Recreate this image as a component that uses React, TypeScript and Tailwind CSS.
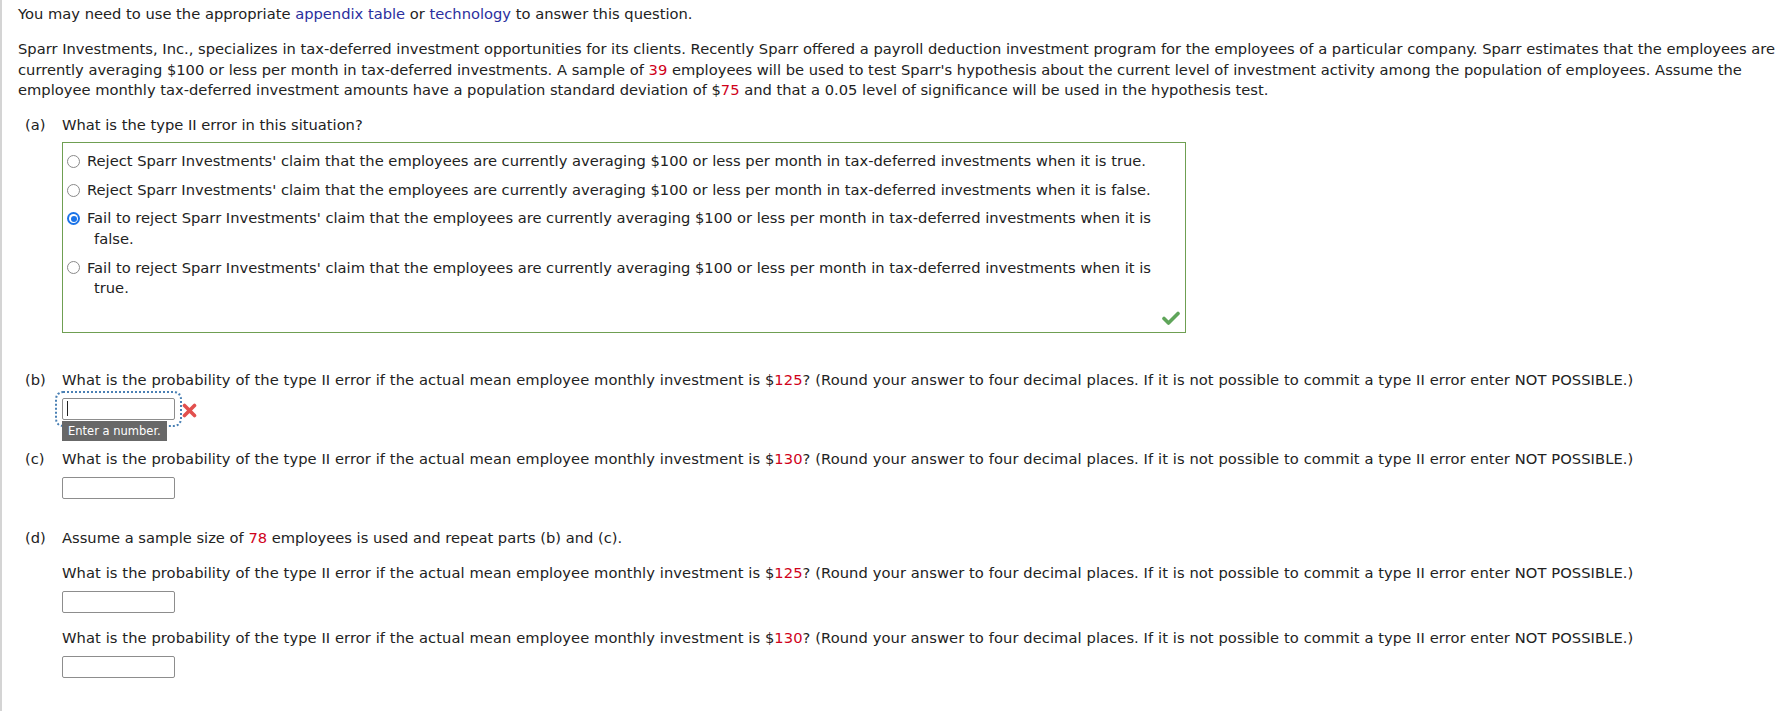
import React from 'react'

const font = { fontFamily: '"DejaVu Sans", Verdana, sans-serif' }

function Radio({ checked }: { checked?: boolean }) {
    if (checked) {
        return (
            <span className="inline-flex w-[13px] h-[13px] shrink-0 rounded-full bg-[#1a73e8] items-center justify-center">
                <span className="w-[9px] h-[9px] rounded-full bg-white flex items-center justify-center">
                    <span className="w-[6px] h-[6px] rounded-full bg-[#1a73e8]" />
                </span>
            </span>
        )
    }
    return <span className="inline-block w-[13px] h-[13px] shrink-0 rounded-full border border-[#8a8a8a] bg-white" />
}

function Option({ checked, first, rest }: { checked?: boolean; first: string; rest?: string }) {
    return (
        <div className="flex items-start">
            <span className="h-[20.6px] flex items-center pl-[4px] pr-[7px]">
                <Radio checked={checked} />
            </span>
            <div className="whitespace-nowrap">
                {first}
                {rest && (
                    <>
                        <br />
                        <span className="pl-[7px]">{rest}</span>
                    </>
                )}
            </div>
        </div>
    )
}

function AnswerBox({ focused }: { focused?: boolean }) {
    if (focused) {
        return (
            <div className="mt-[7.5px] flex items-center">
                <div className="relative outline-2 outline-dotted outline-[#4a80b4] outline-offset-[5px] rounded-[1px]">
                    <div className="w-[113px] h-[22px] border border-[#8d8d8d] rounded-[2px] bg-white flex items-center pl-[4px]">
                        <span className="w-[1px] h-[15px] bg-[#222]" />
                    </div>
                    <div className="absolute left-0 top-[23px] z-10 bg-[#686868] text-white text-[11.5px] leading-[20px] px-[6px] whitespace-nowrap">
                        Enter a number.
                    </div>
                </div>
                <svg className="ml-[7px] mt-[3px]" width="15" height="15" viewBox="0 0 15 15">
                    <path d="M2.5 2.5 L12.5 12.5 M12.5 2.5 L2.5 12.5" stroke="#e2504e" strokeWidth="3.6" strokeLinecap="round" />
                </svg>
            </div>
        )
    }
    return <div className="mt-[7.5px] w-[113px] h-[22px] border border-[#8d8d8d] rounded-[2px] bg-white" />
}

function Red({ children }: { children: React.ReactNode }) {
    return <span className="text-[#d0021b]">{children}</span>
}

const QUESTION_TAIL = '? (Round your answer to four decimal places. If it is not possible to commit a type II error enter NOT POSSIBLE.)'

function Question({ amount }: { amount: string }) {
    return (
        <div className="whitespace-nowrap tracking-[0.08px]">
            What is the probability of the type II error if the actual mean employee monthly investment is $<Red>{amount}</Red>
            {QUESTION_TAIL}
        </div>
    )
}

export default function App() {
    return (
        <div className="min-h-[711px] bg-white border-l-2 border-[#d4d4d4] pl-[16px] pt-[4px] text-[14.7px] leading-[20.6px] text-[#222]" style={font}>
            <p className="whitespace-nowrap">
                You may need to use the appropriate <span className="text-[#2b2f9e]">appendix table</span> or{' '}
                <span className="text-[#2b2f9e]">technology</span> to answer this question.
            </p>

            <p className="mt-[14.5px] whitespace-nowrap">
                Sparr Investments, Inc., specializes in tax-deferred investment opportunities for its clients. Recently Sparr offered a payroll deduction investment program for the employees of a particular company. Sparr estimates that the employees are
                <br />
                currently averaging $100 or less per month in tax-deferred investments. A sample of <Red>39</Red> employees will be used to test Sparr's hypothesis about the current level of investment activity among the population of employees. Assume the
                <br />
                employee monthly tax-deferred investment amounts have a population standard deviation of $<Red>75</Red> and that a 0.05 level of significance will be used in the hypothesis test.
            </p>

            {/* (a) */}
            <div className="mt-[13.7px] flex">
                <span className="w-[44px] pl-[7px] shrink-0">(a)</span>
                <div>
                    <div>What is the type II error in this situation?</div>
                    <div className="mt-[7px] w-[1124px] border border-[#6f9f52]">
                        <div className="pt-[8px] flex flex-col gap-[8px]">
                            <Option first="Reject Sparr Investments' claim that the employees are currently averaging $100 or less per month in tax-deferred investments when it is true." />
                            <Option first="Reject Sparr Investments' claim that the employees are currently averaging $100 or less per month in tax-deferred investments when it is false." />
                            <Option checked first="Fail to reject Sparr Investments' claim that the employees are currently averaging $100 or less per month in tax-deferred investments when it is" rest="false." />
                            <Option first="Fail to reject Sparr Investments' claim that the employees are currently averaging $100 or less per month in tax-deferred investments when it is" rest="true." />
                        </div>
                        <div className="flex justify-end pt-[12px] pb-[7px] pr-[5px]">
                            <svg width="18" height="14" viewBox="0 0 18 14">
                                <path d="M2 7.5 L6.5 12 L16 2.5" fill="none" stroke="#5fa55a" strokeWidth="3.6" strokeLinecap="round" strokeLinejoin="round" />
                            </svg>
                        </div>
                    </div>
                </div>
            </div>

            {/* (b) */}
            <div className="mt-[36.8px] flex">
                <span className="w-[44px] pl-[7px] shrink-0">(b)</span>
                <div>
                    <Question amount="125" />
                    <AnswerBox focused />
                </div>
            </div>

            {/* (c) */}
            <div className="mt-[29px] flex">
                <span className="w-[44px] pl-[7px] shrink-0">(c)</span>
                <div>
                    <Question amount="130" />
                    <AnswerBox />
                </div>
            </div>

            {/* (d) */}
            <div className="mt-[29px] flex">
                <span className="w-[44px] pl-[7px] shrink-0">(d)</span>
                <div>
                    <div>
                        Assume a sample size of <Red>78</Red> employees is used and repeat parts (b) and (c).
                    </div>
                    <div className="mt-[15px]">
                        <Question amount="125" />
                    </div>
                    <AnswerBox />
                    <div className="mt-[15px]">
                        <Question amount="130" />
                    </div>
                    <AnswerBox />
                </div>
            </div>
        </div>
    )
}
